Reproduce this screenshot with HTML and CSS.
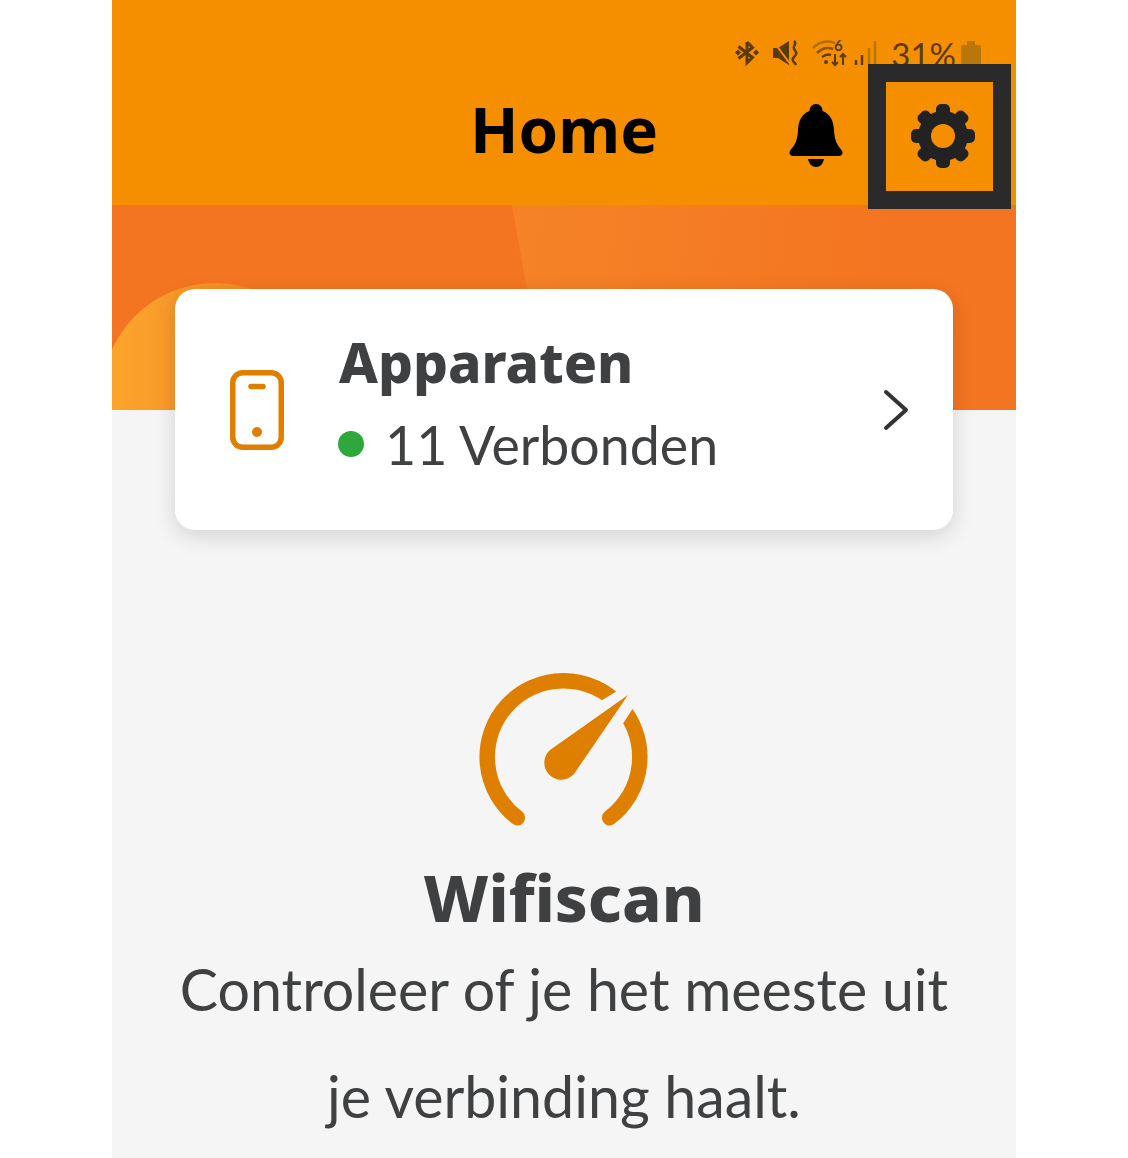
FILE: index.html
```html
<!DOCTYPE html>
<html lang="nl">
<head>
  <meta charset="UTF-8" />
  <meta name="viewport" content="width=device-width, initial-scale=1.0" />
  <title>Home</title>
  <link rel="stylesheet" href="styles.css">
</head>
<body>
  <div class="app">

    <header class="top">
      <div class="status-bar">
        <svg class="st-bt" viewBox="0 0 24 27" width="24" height="27">
          <path d="M12 3v21l5.500-5.500-14-11M12 3l5.500 5.500-14 11" fill="none" stroke="#5a3a08" stroke-width="3"/>
          <path d="M0 13.500l3-3 3 3-3 3zM18 13.500l3-3 3 3-3 3z" fill="#5a3a08"/>
        </svg>
        <svg class="st-mute" viewBox="0 0 28 26" width="28" height="26">
          <path d="M1 8h5l11-7v24l-11-7h-5z" fill="#5a3a08"/>
          <path d="M1 1l18 24" stroke="#f58f00" stroke-width="2"/>
          <path d="M22 1c4 3-2 5 0 8s4 4 0 8 1 5 2 8" fill="none" stroke="#5a3a08" stroke-width="2.500"/>
        </svg>
        <svg class="st-wifi" viewBox="0 0 36 28" width="36" height="28">
          <path d="M1 9c7-7 16-8 22-5" fill="none" stroke="#b06c06" stroke-width="2.500"/>
          <path d="M5 14c5-5 11-6 16-4" fill="none" stroke="#8a5606" stroke-width="2.500"/>
          <path d="M10 18c3-2 6-3 9-2" fill="none" stroke="#5a3a08" stroke-width="2.500"/>
          <circle cx="14" cy="23" r="2" fill="#5a3a08"/>
          <path d="M23 15v11m-3-3l3 3 3-3M31 26v-11m-3 3l3-3 3 3" fill="none" stroke="#5a3a08" stroke-width="2"/>
          <text x="22" y="12" class="st-six">6</text>
        </svg>
        <svg class="st-signal" viewBox="0 0 24 26" width="24" height="26">
          <path d="M2 25v-5M8 25v-10" stroke="#5a3a08" stroke-width="2.500"/>
          <path d="M15 25v-17M21 25v-24" stroke="#b9770a" stroke-width="2.500"/>
        </svg>
        <span class="st-pct">31%</span>
        <div class="st-battery"></div>
      </div>

      <div class="title-row">
        <h1>Home</h1>
        <div class="actions">
          <svg class="bell" viewBox="0 0 54 64" width="54" height="64">
            <path d="M27 0a6.500 6.500 0 0 1 6.500 7c8 3 11 10 11.500 19 .5 10 3 15 7.500 20 2 2.500 1 6-3 6h-45c-4 0-5-3.500-3-6 4.500-5 7-10 7.500-20 .5-9 3.500-16 11.500-19a6.500 6.500 0 0 1 6.500-7z" fill="#000"/>
            <path d="M19 55h16c-1 5-4 8-8 8s-7-3-8-8z" fill="#000"/>
          </svg>
          <svg class="gear" viewBox="-33 -33 66 66" width="66" height="66">
            <g fill="#222">
              <rect x="-7" y="-32" width="14" height="64" rx="5"/>
              <rect x="-7" y="-32" width="14" height="64" rx="5" transform="rotate(45)"/>
              <rect x="-7" y="-32" width="14" height="64" rx="5" transform="rotate(90)"/>
              <rect x="-7" y="-32" width="14" height="64" rx="5" transform="rotate(135)"/>
            </g>
            <circle r="18.500" fill="none" stroke="#222" stroke-width="13"/>
            <circle r="12" fill="#f58f00"/>
          </svg>
        </div>
      </div>
      <div class="gear-highlight"></div>
    </header>

    <div class="hero">
      <div class="hero-blob"></div>
      <div class="hero-facet"></div>
    </div>

    <main class="content">
      <section class="device-card">
        <svg class="phone" viewBox="0 0 54 80" width="54" height="80">
          <rect x="2.750" y="2.750" width="48.500" height="74.500" rx="10" fill="none" stroke="#df7f00" stroke-width="5.500"/>
          <path d="M21 16.500h12" stroke="#df7f00" stroke-width="5.500" stroke-linecap="round"/>
          <circle cx="27" cy="62" r="5" fill="#df7f00"/>
        </svg>
        <div class="device-text">
          <h2>Apparaten</h2>
          <div class="device-status"><span class="dot"></span>11 Verbonden</div>
        </div>
        <svg class="chevron" viewBox="0 0 26 42" width="26" height="42">
          <path d="M3 3l20 18-20 18" fill="none" stroke="#333" stroke-width="4" stroke-linecap="round" stroke-linejoin="round"/>
        </svg>
      </section>

      <section class="scan">
        <svg class="gauge" viewBox="0 0 172 160" width="172" height="160">
          <path d="M39.300 147.700A76.300 76.300 0 1 1 131.700 147.700" fill="none" stroke="#df7f00" stroke-width="15.500" stroke-linecap="round"/>
          <path d="M160 8.400L172 12 135 69 115 35.600Z" fill="#f5f5f5"/>
          <path d="M150 25L72 80A17 17 0 1 0 96 104Z" fill="#df7f00"/>
        </svg>
        <h2>Wifiscan</h2>
        <p>Controleer of je het meeste uit<br>je verbinding haalt.</p>
      </section>
    </main>

  </div>
</body>
</html>
```

FILE: styles.css
```css
* {
  box-sizing: border-box;
  margin: 0;
  padding: 0;
}
html, body {
  height: 100%;
  background: #fff;
  font-family: "Lato", sans-serif;
  color: #3f4042;
}

.app {
  width: 904px;
  height: 1158px;
  margin: 0 auto;
  overflow: hidden;
  display: flex;
  flex-direction: column;
  background: #f5f5f5;
}

/* header */
.top {
  position: relative;
  height: 205px;
  background: #f58f00;
  padding-top: 39px;
  flex-shrink: 0;
}
.status-bar {
  display: flex;
  align-items: center;
  height: 27px;
  padding-right: 35px;
  justify-content: flex-end;
  color: #5a3a08;
}
.status-bar svg { overflow: visible; }
.st-bt { margin-right: 13px; }
.st-mute { margin-right: 12px; }
.st-wifi { margin-right: 6px; }
.st-signal { margin-right: 13px; }
.st-pct {
  font-family: "Lato", sans-serif;
  font-size: 33px;
  line-height: 27px;
  margin-right: 5px;
  position: relative;
  top: 2px;
}
.st-six {
  font-family: "Lato", sans-serif;
  font-size: 15px;
  font-weight: bold;
  fill: #5a3a08;
}
.st-battery {
  position: relative;
  width: 20px;
  height: 20px;
  margin-top: 5px;
  background: #b9770a;
  border-radius: 2px;
}
.st-battery::before {
  content: "";
  position: absolute;
  left: 6px;
  top: -4px;
  width: 8px;
  height: 4px;
  background: #b9770a;
}

.title-row {
  display: flex;
  align-items: center;
  justify-content: center;
  height: 64px;
  margin-top: 31px;
  position: relative;
}
.title-row h1 {
  font-family: "Noto Sans", sans-serif;
  font-size: 63.5px;
  font-weight: 700;
  color: #000;
  line-height: 64px;
}
.actions {
  position: absolute;
  right: 40px;
  top: 6px;
  display: flex;
  align-items: center;
  gap: 67px;
}
.gear-highlight {
  position: absolute;
  z-index: 2;
  left: 756px;
  top: 64px;
  width: 143px;
  height: 145px;
  border: 18px solid #2a2a2a;
}

/* orange band behind the card */
.hero {
  position: relative;
  height: 205px;
  flex-shrink: 0;
  overflow: hidden;
  background: #f47521;
}
.hero-blob {
  position: absolute;
  left: -10px;
  top: 78px;
  width: 226px;
  height: 226px;
  border-radius: 50%;
  background: linear-gradient(90deg, #fca62c 0%, #f58f25 60%);
}
.hero-facet {
  position: absolute;
  left: 400px;
  top: 0;
  width: 504px;
  height: 205px;
  background: linear-gradient(100deg, #f58327 0%, #f47521 70%);
  clip-path: polygon(0 0, 100% 0, 100% 100%, 36px 100%);
}

/* content */
.content {
  flex: 1;
  position: relative;
  padding: 0 63px;
}
.device-card {
  display: flex;
  align-items: center;
  height: 241px;
  margin-top: -121px;
  position: relative;
  background: #fff;
  border-radius: 20px;
  padding: 0 44px 0 55px;
  box-shadow: 0 6px 22px rgba(0, 0, 0, 0.14);
}
.phone { flex-shrink: 0; }
.device-text {
  flex: 1;
  margin-left: 55px;
  padding-bottom: 12px;
}
.device-text h2 {
  font-family: "Noto Sans", sans-serif;
  font-size: 55px;
  font-weight: 800;
  line-height: 76px;
  margin-bottom: 4px;
}
.device-status {
  display: flex;
  align-items: center;
  font-size: 53.7px;
  line-height: 80px;
}
.dot {
  width: 26px;
  height: 26px;
  border-radius: 50%;
  background: #2ea83c;
  margin-right: 21px;
  margin-left: -1px;
}

.scan {
  display: flex;
  flex-direction: column;
  align-items: center;
  margin-top: 140px;
  text-align: center;
}
.scan h2 {
  font-family: "Noto Sans", sans-serif;
  font-size: 65px;
  font-weight: 800;
  line-height: 76px;
  margin-top: 29px;
}
.scan p {
  font-size: 57.3px;
  line-height: 107px;
  white-space: nowrap;
  margin-top: 0;
}
```
